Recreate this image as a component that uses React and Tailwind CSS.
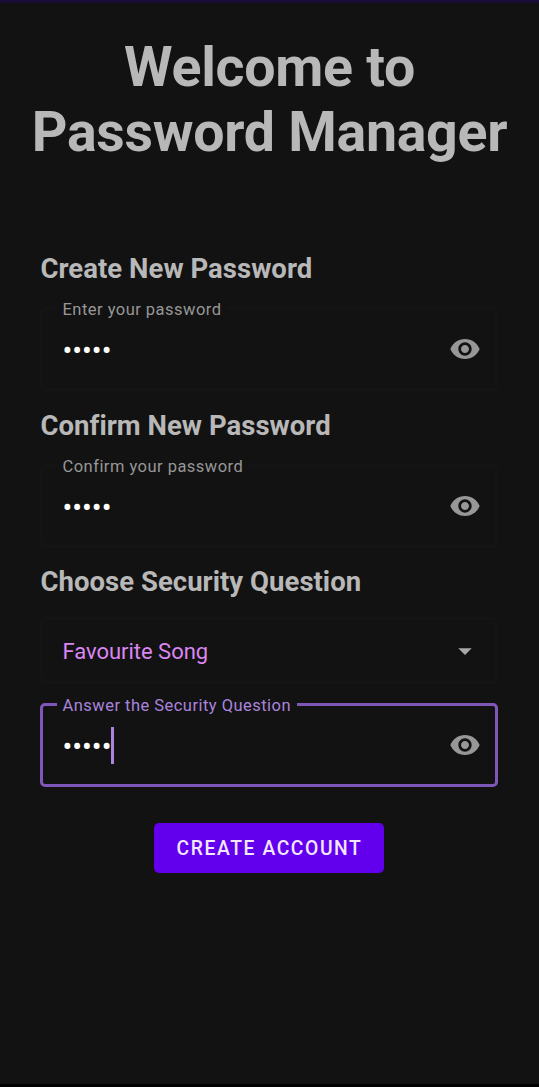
import React from 'react';

function EyeIcon() {
  return (
    <svg viewBox="0 0 24 24" className="w-8 h-8 flex-shrink-0 fill-[#979797]">
      <path d="M12 4.5C7 4.5 2.73 7.61 1 12c1.73 4.39 6 7.5 11 7.5s9.27-3.11 11-7.5c-1.73-4.39-6-7.5-11-7.5zM12 17c-2.76 0-5-2.24-5-5s2.24-5 5-5 5 2.24 5 5-2.24 5-5 5zm0-8c-1.66 0-3 1.34-3 3s1.34 3 3 3 3-1.34 3-3-1.34-3-3-3z" />
    </svg>
  );
}

function SectionTitle({ children }) {
  return (
    <h2 className="h-8 pl-[0.5px] text-[27.5px] leading-8 font-bold tracking-[0.03px] text-[#b8b8b8] whitespace-nowrap">
      {children}
    </h2>
  );
}

function PasswordField({ label, value, focused }) {
  return (
    <fieldset
      className={`h-[92px] min-w-0 rounded-[5px] border-[3px] pl-[13.5px] pr-[14.5px] ${
        focused ? 'border-[#7f57b8]' : 'border-[#141414]'
      }`}
    >
      <legend
        className={`h-[19px] px-1.5 text-[16.5px] leading-[21px] tracking-[0.47px] whitespace-nowrap ${
          focused ? 'text-[#aa84de]' : 'text-[#979797]'
        }`}
      >
        {label}
      </legend>
      <div className="flex h-[62px] items-center justify-between pl-1.5">
        <div className="flex items-center">
          <span className="pt-[3px] text-[29px] leading-8 text-white">{value}</span>
          {focused && <span className="h-[37px] w-[3px] bg-[#aa84de]" />}
        </div>
        <EyeIcon />
      </div>
    </fieldset>
  );
}

function App() {
  return (
    <div className="flex h-[1087px] w-[539px] flex-col overflow-hidden border-t-3 border-b-3 border-t-[#190c36] border-b-black bg-[#121212] font-[Roboto,sans-serif]">
      <h1 className="mt-[33px] text-center text-[55.5px] leading-[64.5px] font-bold tracking-[-0.3px] whitespace-nowrap text-[#b8b8b8]">
        Welcome to
        <br />
        Password Manager
      </h1>

      <div className="mt-[88px] flex flex-col pr-[41px] pl-[40px]">
        <SectionTitle>Create New Password</SectionTitle>
        <div className="mt-[14px]">
          <PasswordField label="Enter your password" value="•••••" />
        </div>

        <div className="mt-[19px]">
          <SectionTitle>Confirm New Password</SectionTitle>
        </div>
        <div className="mt-[14px]">
          <PasswordField label="Confirm your password" value="•••••" />
        </div>

        <div className="mt-[18px]">
          <SectionTitle>Choose Security Question</SectionTitle>
        </div>
        <div className="mt-[19px] flex h-[67px] items-center justify-between rounded-[5px] border-[3px] border-[#141414] pr-[14.5px] pl-[19.5px]">
          <span className="pt-px text-[22px] tracking-[-0.03px] text-[#db86f3]">Favourite Song</span>
          <svg viewBox="0 0 24 24" className="h-8 w-8 fill-[#a8a8a8]">
            <path d="M7 10l5 5 5-5z" />
          </svg>
        </div>

        <div className="mt-[11px]">
          <PasswordField label="Answer the Security Question" value="•••••" focused />
        </div>

        <button className="mt-[36px] h-[50px] w-[230px] self-center rounded-[5px] bg-[#6200ee] pt-[3px] pl-px text-[19.3px] font-medium tracking-[1.6px] whitespace-nowrap text-[#f3e6ff]">
          CREATE ACCOUNT
        </button>
      </div>
    </div>
  );
}

export default App;
